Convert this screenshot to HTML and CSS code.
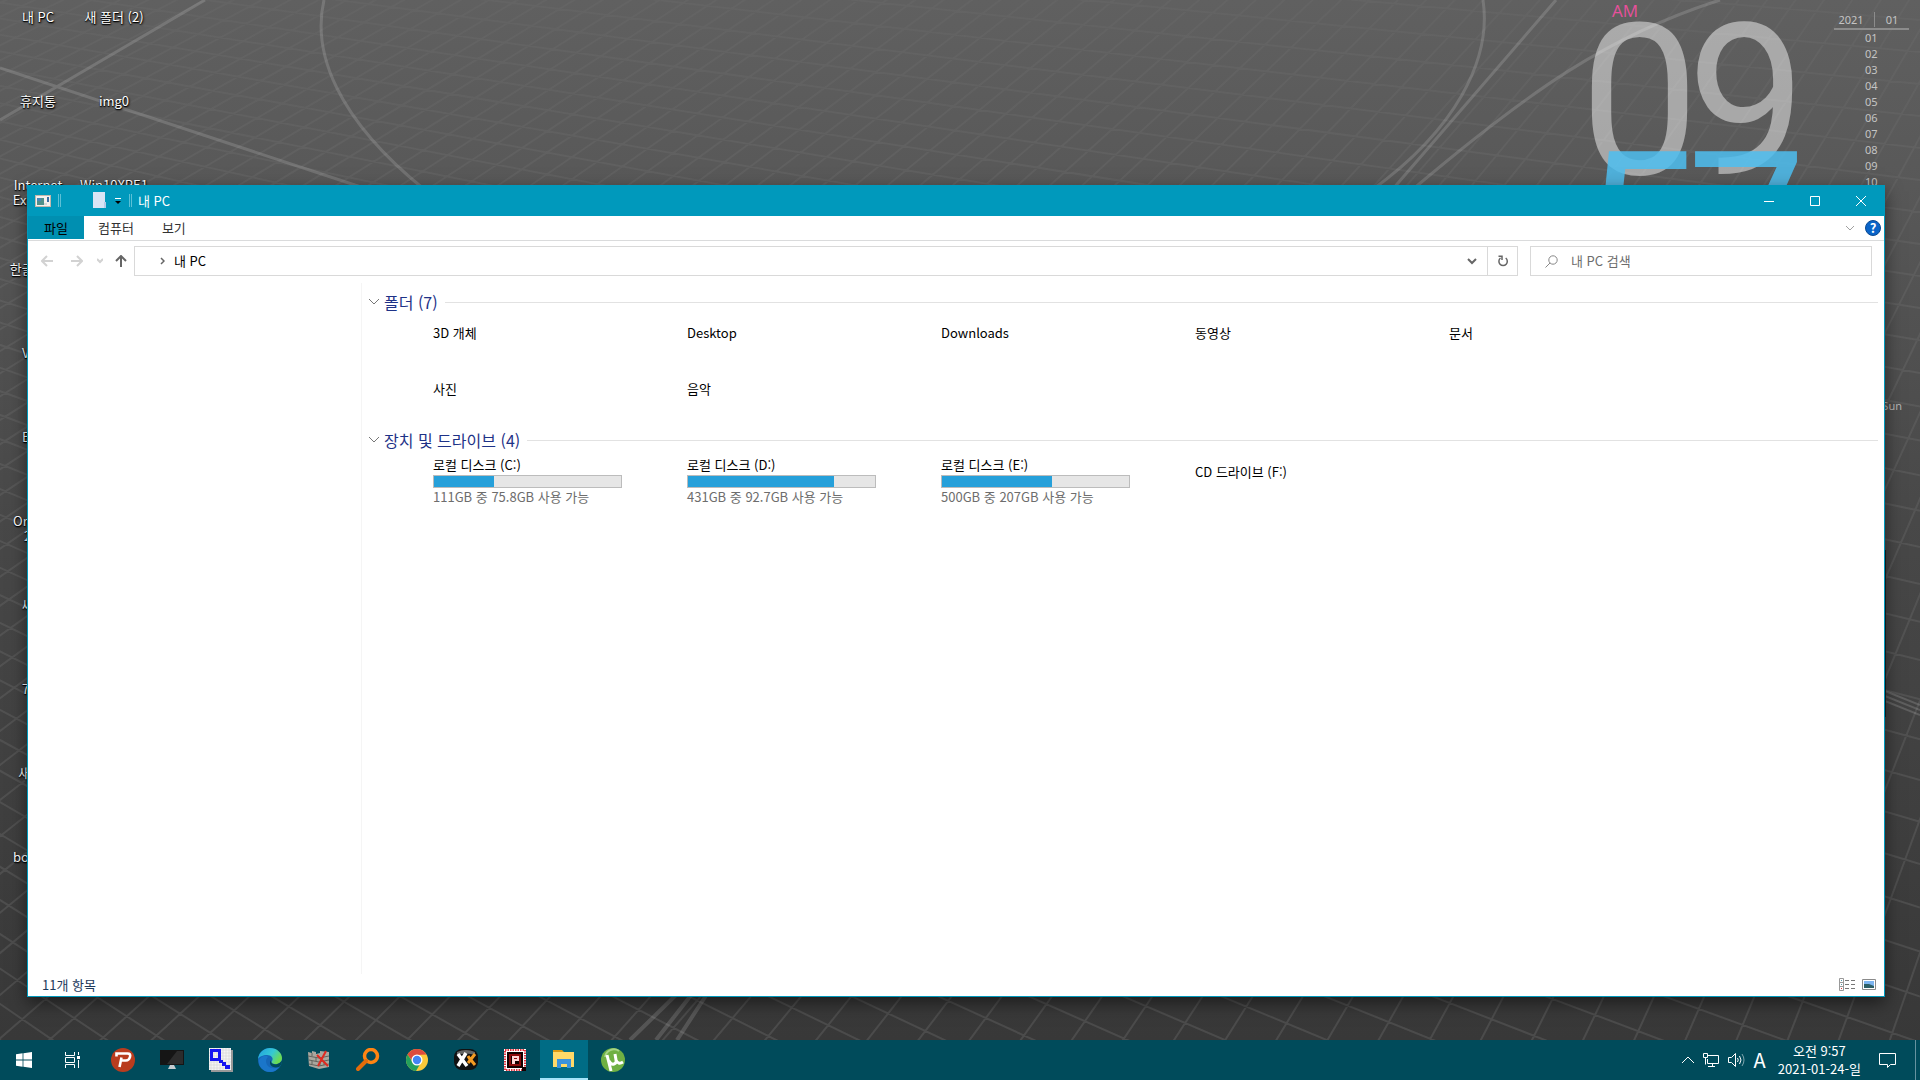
FILE: index.html
```html
<!DOCTYPE html>
<html lang="ko">
<head>
<meta charset="utf-8">
<meta name="viewport" content="width=device-width, initial-scale=1">
<title>내 PC</title>
<link rel="stylesheet" href="styles.css">
</head>
<body>
<main class="desktop">
  <svg class="wallpaper" viewBox="0 0 1920 1080" preserveAspectRatio="xMidYMin slice" aria-hidden="true">
    <defs>
      <linearGradient id="fade" x1="0" y1="0" x2="0" y2="1"><stop offset="0" stop-color="#fff" stop-opacity=".25"/><stop offset=".3" stop-color="#fff" stop-opacity=".6"/><stop offset="1" stop-color="#fff"/></linearGradient>
      <mask id="fademask" maskUnits="userSpaceOnUse" x="0" y="0" width="1920" height="1080"><rect width="1920" height="1080" fill="url(#fade)"/></mask>
    </defs>
    <g mask="url(#fademask)"><path id="grid" class="grid-line"/></g>
    <g class="bright-line">
      <path d="M324 0C312 52 336 118 425 190M0 68L370 190M0 120L205 0M1483 0C1492 60 1455 130 1372 190M1556 0L1392 190M1720 0C1610 35 1530 90 1412 190"/>
      <path class="strong" d="M630 1040L677 994M656 1040L692 994M677 1040L707 994"/>
      <path class="thin" d="M1880 689L1920 705M1880 694L1920 710M1880 699L1920 715"/>
    </g>
    <rect x="1880" y="550" width="6" height="167" fill="#1c1f21"/>
  </svg>

  <section class="clock" aria-label="시계">
    <span class="clock-period">AM</span>
    <div class="clock-digits clock-hour"><span>0</span><span>9</span></div>
    <div class="clock-digits clock-minute"><span>5</span><span>7</span></div>
  </section>

  <section class="calendar" aria-label="달력">
    <header class="calendar-head"><span>2021</span><span>01</span></header>
    <ol class="calendar-days"><li>01</li><li>02</li><li>03</li><li>04</li><li>05</li><li>06</li><li>07</li><li>08</li><li>09</li><li>10</li></ol>
  </section>
  <span class="weekday">Sun</span>

  <ul class="shortcuts">
    <li>내 PC</li>
    <li>휴지통</li>
    <li>Internet<br>Explorer</li>
    <li>한글 2018</li>
    <li class="partial">V</li>
    <li class="partial">E</li>
    <li class="partial wide">Or<br>&nbsp; &nbsp;2</li>
    <li class="partial">싸</li>
    <li class="partial">7</li>
    <li>새 폴더</li>
    <li class="partial wide">boo</li>
    <li>새 폴더 (2)</li>
    <li>img0</li>
    <li>Win10XPE1</li>
  </ul>

  <section class="window" aria-label="내 PC">
    <header class="titlebar">
      <svg class="app-icon" width="16" height="14" viewBox="0 0 16 14"><rect x=".5" y="1.5" width="15" height="11" fill="#f5f1ee" stroke="#c5b7ac"/><path d="M2 4h7v7H2z" fill="#4f8f8a"/><path d="M2 4h4v3H2z" fill="#4a86b8"/><path d="M12 3h2v5h-2z" fill="#3b6ea5"/><path d="M9 9h3v2H9z" fill="#d8d8d8"/></svg>
      <i class="title-sep"></i>
      <svg class="page-icon" width="14" height="17" viewBox="0 0 14 17"><path d="M0 0h12v10h1v6H0z" fill="#d9e4f4"/><path d="M11 10h2v6h-2z" fill="#b6cbe8"/></svg>
      <svg class="more-icon" width="8" height="8" viewBox="0 0 8 8"><path d="M1 1.500h6" stroke="#fff"/><path d="M1 4h6L4 7z" fill="#000"/></svg>
      <i class="title-sep"></i>
      <h1 class="title">내 PC</h1>
      <div class="window-buttons">
        <button type="button" aria-label="최소화"><svg width="10" height="10" viewBox="0 0 10 10"><path d="M0 5.500h10"/></svg></button>
        <button type="button" aria-label="최대화"><svg width="10" height="10" viewBox="0 0 10 10"><path d="M.5.500h9v9h-9z"/></svg></button>
        <button type="button" aria-label="닫기"><svg width="10" height="10" viewBox="0 0 10 10"><path d="M0 0l10 10M10 0L0 10"/></svg></button>
      </div>
    </header>

    <nav class="ribbon">
      <button type="button" class="tab tab-file">파일</button>
      <button type="button" class="tab">컴퓨터</button>
      <button type="button" class="tab">보기</button>
      <button type="button" class="ribbon-toggle" aria-label="리본 확장"><svg width="10" height="6" viewBox="0 0 10 6"><path d="M1 1l4 4 4-4" fill="none" stroke="#a0a0a0"/></svg></button>
      <button type="button" class="help" aria-label="도움말">?</button>
    </nav>

    <div class="navbar">
      <button type="button" class="nav-btn faint" aria-label="뒤로"><svg width="12" height="12" viewBox="0 0 12 12"><path d="M12 6H1M6 1L1 6l5 5"/></svg></button>
      <button type="button" class="nav-btn faint" aria-label="앞으로"><svg width="12" height="12" viewBox="0 0 12 12"><path d="M0 6h11M6 1l5 5-5 5"/></svg></button>
      <button type="button" class="nav-btn faint nav-recent" aria-label="최근 위치"><svg width="6" height="6" viewBox="0 0 6 6"><path d="M0 1l3 3 3-3"/></svg></button>
      <button type="button" class="nav-btn nav-up" aria-label="위로"><svg width="12" height="12" viewBox="0 0 12 12"><path d="M6 12V1M1 6l5-5 5 5"/></svg></button>
      <div class="address">
        <svg width="5" height="8" viewBox="0 0 5 8"><path d="M1 1l3 3-3 3" fill="none" stroke="#666" stroke-width="1.500"/></svg>
        <span class="crumb">내 PC</span>
        <button type="button" class="address-btn address-drop" aria-label="이전 위치"><svg width="10" height="7" viewBox="0 0 10 7"><path d="M1 1l4 4 4-4"/></svg></button>
        <button type="button" class="address-btn address-refresh" aria-label="새로 고침"><svg width="12" height="12" viewBox="0 0 12 12"><path d="M3.500 3A4.200 4.200 0 1 0 8.700 3M1.500 1.200H5V5" /></svg></button>
      </div>
      <label class="search">
        <svg width="13" height="13" viewBox="0 0 13 13"><circle cx="8" cy="5" r="4.200"/><path d="M5 8L.5 12.500"/></svg>
        <input type="text" placeholder="내 PC 검색" aria-label="내 PC 검색">
      </label>
    </div>

    <div class="body">
      <aside class="tree"></aside>
      <div class="content">
        <h2 class="group"><svg width="10" height="6" viewBox="0 0 10 6"><path d="M0 0l5 5 5-5"/></svg><span>폴더 (7)</span></h2>
        <ul class="items folders"><li>3D 개체</li><li>Desktop</li><li>Downloads</li><li>동영상</li><li>문서</li><li>사진</li><li>음악</li></ul>
        <h2 class="group"><svg width="10" height="6" viewBox="0 0 10 6"><path d="M0 0l5 5 5-5"/></svg><span>장치 및 드라이브 (4)</span></h2>
        <ul class="items drives">
          <li><span>로컬 디스크 (C:)</span><div class="usage"><div class="used" style="width:32%"></div></div><span class="free">111GB 중 75.8GB 사용 가능</span></li>
          <li><span>로컬 디스크 (D:)</span><div class="usage"><div class="used" style="width:78%"></div></div><span class="free">431GB 중 92.7GB 사용 가능</span></li>
          <li><span>로컬 디스크 (E:)</span><div class="usage"><div class="used" style="width:59%"></div></div><span class="free">500GB 중 207GB 사용 가능</span></li>
          <li class="disc"><span>CD 드라이브 (F:)</span></li>
        </ul>
      </div>
    </div>

    <footer class="statusbar">
      <span class="count">11개 항목</span>
      <button type="button" aria-label="자세히"><svg width="17" height="13" viewBox="0 0 17 13"><path d="M.5.500h4v12h-4zM.5 4.500h4M.5 8.500h4" fill="none" stroke="#999"/><path d="M6 2.500h4M12 2.500h4M6 6.500h4M12 6.500h4M6 10.500h4M12 10.500h4" stroke="#777"/><path d="M2 2h1v1H2zM2 6h1v1H2z" fill="#59a"/><path d="M2 10h1v1H2z" fill="#d33"/></svg></button>
      <button type="button" aria-label="큰 아이콘"><svg width="14" height="11" viewBox="0 0 14 11"><path d="M.5.500h13v10H.5z" fill="#fff" stroke="#8a8a8a"/><path d="M2 2h10v7H2z" fill="#7db5f0"/><path d="M2 5h5l5 2v2H2z" fill="#2d5f66"/></svg></button>
    </footer>
  </section>
</main>

<footer class="taskbar">
  <div class="apps">
    <button type="button" aria-label="시작"><svg width="16" height="16" viewBox="0 0 16 16"><path d="M0 2.200L6.600 1.300V7.500H0zM7.400 1.200L16 0v7.500H7.400zM0 8.400h6.600v6.300L0 13.800zM7.400 8.400H16V16l-8.600-1.200z" fill="#fff"/></svg></button>
    <button type="button" aria-label="작업 보기"><svg width="17" height="16" viewBox="0 0 17 16"><path d="M1.500 0v3.500h9V0M1.500 16v-3.500h9V16M1.500 5.500h9v5h-9zM14.500 0v3M14.500 8v8" fill="none" stroke="#fff"/><path d="M13 4h3v3h-3z" fill="#fff"/></svg></button>
    <button type="button" aria-label="PotPlayer"><svg width="24" height="24" viewBox="0 0 24 24"><circle cx="12" cy="12" r="12" fill="#b93c1e"/><path d="M8.500 19l2-9.500M5.500 8.500V5.500h11q3.500 0 2.500 3.500t-4 3.500h-4" fill="none" stroke="#fff" stroke-width="2.600"/></svg></button>
    <button type="button" aria-label="디스플레이"><svg width="24" height="24" viewBox="0 0 24 24"><path d="M0 2h24v15H0z" fill="#151515"/><path d="M17 3h6v13H7z" fill="#2c2c2c"/><path d="M10 17h4l2 4H8z" fill="#c4cbd0"/></svg></button>
    <button type="button" aria-label="검색 도구"><svg width="24" height="24" viewBox="0 0 24 24"><path d="M2 2h22v22H2z" fill="#999"/><path d="M0 0h22v22H0z" fill="#f4f4f4"/><path d="M2 0v22M5 0v22M8 0v22M11 0v22M14 0v22M17 0v22M20 0v22M0 2h22M0 5h22M0 8h22M0 11h22M0 14h22M0 17h22M0 20h22" stroke="#ccc" stroke-width=".5"/><path d="M1 1h11v12H1zM4 4v6h5V4z" fill="#1414f0" fill-rule="evenodd"/><path d="M10 12h4v2h3v3h4v4h-5v-3h-3v-3h-3z" fill="#1414f0"/></svg></button>
    <button type="button" aria-label="Edge"><svg width="24" height="24" viewBox="0 0 24 24"><defs><linearGradient id="edge" x1="0" y1="0" x2="1" y2=".5"><stop offset="0" stop-color="#1f9fe0"/><stop offset=".6" stop-color="#35c8d4"/><stop offset="1" stop-color="#6cdb52"/></linearGradient></defs><circle cx="12" cy="12" r="12" fill="#1567b8"/><path d="M0 11C1 4 6 0 12 0c7 0 12 5 12 10 0 4-3 6-6 6-4 0-5-1-4-3 2-3-1-6-5-6C5 7 1 9 0 11z" fill="url(#edge)"/><path d="M8 13c0 6 6 9 13 6-2 3-5 5-9 5C5 24 0 18 1 12c3-5 8-5 9-3-1 1-2 2-2 4z" fill="#1a76ca"/><path d="M13 12q-1 4 5 4.500 4-1 6-4c0 3-1 5-3 6.500-7 2-11-3-8-7z" fill="#004b5a"/></svg></button>
    <button type="button" aria-label="방화벽"><svg width="24" height="24" viewBox="0 0 24 24"><path d="M1 4l4 1V3l4 1v2l4-1V3l9 1v15l-10 2L2 18z" fill="#aaa79e"/><path d="M1 8l11 2 10-2M2 12l10 2 10-2M2 16l10 2 10-2M5 5v3M9 9v4M5 13v3M13 14v4M17 13v4" fill="none" stroke="#63645e"/><path d="M10 7l11 11M19 3l-8 15" stroke="#e02a20" stroke-width="2"/></svg></button>
    <button type="button" aria-label="Everything"><svg width="24" height="24" viewBox="0 0 24 24"><circle cx="15" cy="8" r="6.500" fill="none" stroke="#ff8412" stroke-width="3.500"/><path d="M10 13L2 21" stroke="#e36c0b" stroke-width="4" stroke-linecap="round"/></svg></button>
    <button type="button" aria-label="Chrome"><svg width="24" height="24" viewBox="0 0 24 24"><circle cx="12" cy="12" r="11" fill="#fbc93a"/><path d="M2.500 6.500A11 11 0 0 1 21.500 6.500L12 7 8 14z" fill="#dd4b3e"/><path d="M2.500 6.500A11 11 0 0 0 11 23l5-8.500-8 0z" fill="#23a05c"/><circle cx="12" cy="12" r="5.500" fill="#fff"/><circle cx="12" cy="12" r="4.200" fill="#4285f4"/></svg></button>
    <button type="button" aria-label="XnView"><svg width="24" height="24" viewBox="0 0 24 24"><rect y="1" width="24" height="21" rx="8" fill="#111"/><path d="M3 4q9-4 18 0v3q-9-3-18 0z" fill="#666"/><path d="M4 6l9 12M12 5L4 18" stroke="#fff" stroke-width="3.500"/><path d="M14 8l3 5M21 6l-7 9M17 12l4 5" stroke="#f59b22" stroke-width="3"/></svg></button>
    <button type="button" aria-label="픽셀 편집기"><svg width="24" height="24" viewBox="0 0 24 24"><path d="M1 1h22v22H1z" fill="#fff"/><path d="M2 2h20v20H2z" fill="none" stroke="#e2343e" stroke-width="2" stroke-dasharray="1.500 1"/><path d="M4 4h16v16H4z" fill="#120000"/><path d="M7 7h10v10H7z" fill="none" stroke="#8c0a0a" stroke-width="2"/><path d="M9 8h7v5h-4v3H9z" fill="#ffd5d5"/><path d="M11 10h3v1h-3z" fill="#8c0a0a"/><path d="M19 19h4v4h-4z" fill="#100"/></svg></button>
    <button type="button" class="active" aria-label="파일 탐색기"><svg width="24" height="24" viewBox="0 0 24 24"><path d="M1 3h9l2 2v3H1z" fill="#dc9a14"/><path d="M1 5h21v15H1z" fill="#ffd968"/><path d="M5 12h14v9h-4v-4H9v4H5z" fill="#3a93dc"/></svg></button>
    <button type="button" aria-label="uTorrent"><svg width="24" height="24" viewBox="0 0 24 24"><circle cx="12" cy="12" r="12" fill="#6fb043"/><path d="M4 9A9 9 0 0 1 18 3" fill="none" stroke="#a6d486" stroke-width="2"/><path d="M6 7l4 16M8 13q2 4 5 3t2-4l-1-6M15 12q2 5 7 2" fill="none" stroke="#fff" stroke-width="3"/></svg></button>
  </div>
  <div class="tray">
    <button type="button" aria-label="숨겨진 아이콘"><svg width="12" height="8" viewBox="0 0 12 8"><path d="M0 7l6-6 6 6"/></svg></button>
    <button type="button" aria-label="네트워크"><svg width="16" height="14" viewBox="0 0 16 14"><path d="M5 2.500h10.500v8H4.500V6M.5.500h4v4h-4zM2.500 4.500v7M9.500 10.500v3M5 13.500h7"/></svg></button>
    <button type="button" aria-label="볼륨"><svg width="17" height="14" viewBox="0 0 17 14"><path d="M.5 4.500h3l4-4v13l-4-4h-3zM9.500 5q1.500 2 0 4M11.500 3q3 4 0 8"/><path d="M14 1q4 6 0 12" opacity=".5"/></svg></button>
    <button type="button" class="ime">A</button>
    <time class="time" datetime="2021-01-24T09:57">오전 9:57<br>2021-01-24-일</time>
    <button type="button" class="notice" aria-label="알림"><svg width="17" height="17" viewBox="0 0 17 17"><path d="M.5 1.500h16v11h-5l-3 3v-3h-8z"/></svg></button>
    <i class="show-desktop"></i>
  </div>
</footer>
<script src="wallpaper.js"></script>
</body>
</html>
```
FILE: wallpaper.js
```js
// Perspective floor grid: two families of lines, each running to its own vanishing point.
const parts = [];
for (let x = -4000; x < 2300; x += 52) {
  parts.push(`M2700 -1300L${x} 1080`);
}
for (let y = -220; y < 3000; y += 16 + Math.max(0, y) * 0.02) {
  parts.push(`M-1900 -300L1920 ${-300 + (y + 300) * 2}`);
}
document.getElementById('grid').setAttribute('d', parts.join(''));
```
FILE: styles.css
```css
* { box-sizing: border-box; }

html, body { height: 100%; }

body {
  margin: 0;
  display: flex;
  flex-direction: column;
  overflow: hidden;
  font-family: "Noto Sans CJK KR", "Noto Sans", sans-serif;
  font-size: 13px;
  line-height: 16px;
  color: #000;
}

ul, ol { margin: 0; padding: 0; list-style: none; }
h1, h2 { margin: 0; font-weight: 400; }
button { border: 0; padding: 0; margin: 0; background: none; font: inherit; color: inherit; }
svg { display: block; flex: none; }

/* Desktop */
.desktop {
  position: relative;
  flex: 1;
  overflow: hidden;
  background: linear-gradient(#606060, #585858 18%, #484848 50%, #383838);
}
.wallpaper { position: absolute; inset: 0; width: 100%; height: 100%; }
.grid-line { fill: none; stroke: #fff; stroke-width: 2; opacity: .1; }
.bright-line { fill: none; stroke: #fff; stroke-width: 3; opacity: .15; }
.bright-line .strong { stroke-width: 4; }
.bright-line .thin { stroke-width: 2; }

.clock {
  position: absolute;
  top: 0;
  right: 114px;
  width: 226px;
  height: 360px;
  font-family: "Open Sans", sans-serif;
}
.clock-period { position: absolute; left: 32px; top: 0; font-size: 17px; line-height: 22px; color: #e8509c; }
.clock-digits {
  position: absolute;
  left: 0;
  display: grid;
  grid-template-columns: 107px 107px;
  font-family: Roboto, sans-serif;
  font-size: 212px;
  line-height: 212px;
  color: rgba(255, 255, 255, .47);
}
.clock-hour { top: -4px; }
.clock-minute { top: 124px; color: rgba(78, 190, 240, .85); }

.calendar {
  position: absolute;
  top: 12px;
  right: 11px;
  width: 75px;
  font-family: "Noto Sans", sans-serif;
  font-size: 11px;
  color: #c4c4c4;
}
.calendar-head { display: flex; border-bottom: 2px solid #8c8c8c; padding-bottom: 1px; line-height: 15px; }
.calendar-head span { flex: 1; text-align: center; }
.calendar-head span:first-child { flex: none; width: 41px; padding-right: 6px; border-right: 1px solid #8c8c8c; }
.calendar-days { padding-left: 31px; }
.weekday { position: absolute; top: 398px; right: 18px; font-family: "Noto Sans", sans-serif; font-size: 11px; color: #b4b4b4; }

.shortcuts {
  position: absolute;
  inset: 9px auto auto 0;
  display: grid;
  grid-template-rows: repeat(11, 84px);
  grid-auto-flow: column;
  grid-auto-columns: 76px;
  line-height: 15px;
  color: #fff;
  text-align: center;
  text-shadow: 1px 1px 2px #000, 0 1px 1px #000;
}
.partial { padding-left: 22px; text-align: left; }
.partial.wide { padding-left: 13px; }

/* Explorer window */
.window {
  position: absolute;
  inset: 185px 35px 43px 27px;
  display: flex;
  flex-direction: column;
  border: 1px solid #0099bc;
  border-top: 0;
  background: #fff;
  box-shadow: 0 6px 16px rgba(0, 0, 0, .5);
}

.titlebar { display: flex; align-items: center; height: 31px; padding-left: 7px; background: #0099bc; color: #fff; }
.title-sep { width: 3px; height: 13px; margin-left: 7px; border: solid #5cc0d6; border-width: 0 1px; }
.page-icon { margin-left: 32px; }
.more-icon { margin-left: 7px; }
.title { flex: 1; margin-left: 6px; font-size: 13px; }
.window-buttons { display: flex; align-self: stretch; }
.window-buttons button { display: grid; place-items: center; width: 46px; }
.window-buttons path { fill: none; stroke: #fff; }

.ribbon { display: flex; align-items: center; height: 25px; padding-right: 3px; border-bottom: 1px solid #dadbdc; color: #333; }
.tab { height: 23px; padding: 0 14px; margin-bottom: 1px; }
.tab-file { width: 56px; background: #008fb1; color: #000; }
.ribbon-toggle { margin-left: auto; margin-right: 10px; }
.help { width: 16px; height: 16px; border-radius: 50%; background: #0a64c8; border: 1px solid #0a4a94; color: #fff; font-weight: 700; line-height: 14px; }

.navbar { display: flex; height: 42px; padding: 5px 12px 7px 13px; }
.nav-btn { width: 12px; margin-right: 18px; }
.nav-btn path { fill: none; stroke: #666; stroke-width: 2; }
.nav-btn.faint path { stroke: #d2d2d2; }
.nav-btn.nav-recent { width: 6px; margin: 0 12px 0 -4px; }
.nav-btn.nav-up { margin-right: 7px; }
.address { flex: 4; display: flex; align-items: center; border: 1px solid #d9d9d9; padding-left: 25px; }
.crumb { flex: 1; margin-left: 9px; }
.address-btn { display: grid; place-items: center; align-self: stretch; width: 30px; }
.address-btn path { fill: none; stroke: #666; stroke-width: 2; }
.address-refresh { border-left: 1px solid #d9d9d9; }
.address-refresh path { stroke-width: 1.5; }
.search { flex: 0 0 342px; display: flex; align-items: center; margin-left: 12px; padding: 0 14px; border: 1px solid #d9d9d9; }
.search circle, .search path { fill: none; stroke: #888; }
.search input { flex: 1; min-width: 0; margin-left: 13px; padding: 0; border: 0; outline: 0; background: none; font: inherit; }
.search input::placeholder { color: #6d6d6d; opacity: 1; }

.body { flex: 1; display: flex; min-height: 0; }
.tree { flex: 0 0 334px; border-right: 1px solid #f5f5f5; }
.content { flex: 1; min-width: 0; padding: 8px 6px 0 7px; }
.group { display: flex; align-items: center; height: 22px; font-size: 16px; line-height: 22px; color: #1e3287; }
.group svg { margin-right: 5px; }
.group path { fill: none; stroke: #777; }
.group::after { content: ""; flex: 1; height: 1px; margin-left: 7px; background: #e2e2e2; }
.items { display: grid; grid-template-columns: repeat(auto-fill, 189px); column-gap: 65px; padding-left: 64px; }
.folders { row-gap: 40px; padding-top: 12px; margin-bottom: 32px; }
.drives { padding-top: 6px; }
.drives li { display: flex; flex-direction: column; }
.drives .disc { padding-top: 7px; }
.usage { height: 13px; margin: 2px 0 1px; border: 1px solid #bcbcbc; background: #e6e6e6; }
.used { height: 100%; background: #26a0da; }
.free { color: #6d6d6d; }

.statusbar { display: flex; align-items: center; gap: 6px; height: 22px; padding: 0 8px 1px 14px; color: #1e395b; }
.count { margin-right: auto; }

/* Taskbar */
.taskbar { display: flex; justify-content: space-between; height: 40px; background: #004b5b; color: #fff; }
.apps { display: flex; gap: 1px; }
.apps button { display: grid; place-items: center; width: 48px; }
.apps .active { background: #006c85; border-bottom: 2px solid #a4e4fa; }
.apps button:nth-child(2) { margin-left: -1px; margin-right: 2px; }
.tray { display: flex; align-items: center; }
.tray path { fill: none; stroke: #fff; }
.tray button { margin-right: 9px; }
.tray .ime { margin-right: 12px; font-size: 20px; line-height: 24px; }
.time { line-height: 18px; text-align: center; }
.tray .notice { margin: 0 19px 0 18px; }
.show-desktop { width: 5px; height: 40px; border-left: 1px solid #6693a0; }
```
